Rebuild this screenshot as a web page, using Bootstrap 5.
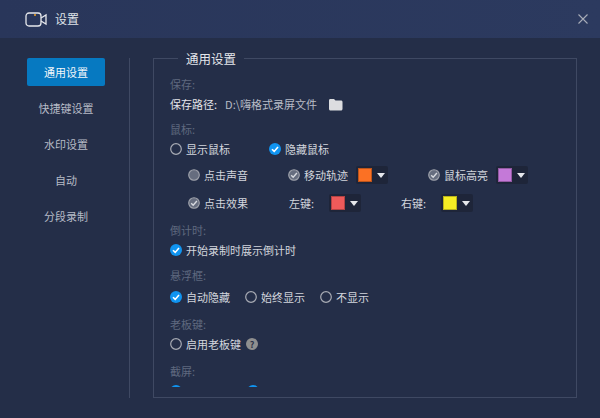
<!DOCTYPE html>
<html lang="zh-CN">
<head>
    <meta charset="UTF-8">
    <meta name="viewport" content="width=device-width, initial-scale=1.0">
    <title>设置</title>
    <link href="https://cdn.jsdelivr.net/npm/bootstrap@5.3.0/dist/css/bootstrap.min.css" rel="stylesheet">
    <style>
        html, body { height: 100%; }
        body { background: #242e48; color: #d3d6dd; font: 11px/1 "Noto Sans CJK SC", "Liberation Sans", sans-serif; overflow: hidden; }
        .title-bar { height: 38px; background: linear-gradient(90deg, #29365a, #2c3a5f); padding: 0 12px 0 25px; }
        .title-bar span { font-size: 12px; color: #dfe2e8; margin-left: 8px; }
        .main-wrap { padding-top: 11px; }
        .side-col { width: 130px; height: 340px; margin-top: 9px; padding-left: 27px; border-right: 1px solid #3f4963; }
        .side-item { width: 78px; height: 28px; margin-bottom: 8px; border-radius: 2px; color: #b6bbc6; }
        .side-item.on { background: #0679c1; color: #f2f6fa; }
        .group-box { width: 424px; height: 349px; margin: 0 0 0 23px; padding: 0; border: 1px solid #3f4963; }
        .group-box legend { float: none; width: auto; height: 18px; margin: 0 0 0 24px; padding: 1px 8px 0; font-size: 12.5px; line-height: 18px; color: #e3e6eb; }
        .group-clip { height: 320px; overflow: hidden; padding: 8px 0 0 16px; }
        .sect-label { height: 19px; color: #5f697f; display: flex; align-items: center; }
        .opt-row { height: 20px; }
        .sect-gap { margin-top: 6px; }
        .sect-gap-lg { margin-top: 8px; }
        .row-nudge { margin-top: 2px; }
        .sub-row { height: 20px; padding-left: 18px; margin-top: 8px; }
        .sub-row.first { margin-top: 6px; }
        .opt { gap: 4px; }
        .opt svg { flex: none; }
        .strong-label { color: #e4e6ea; }
        .path-text { color: #b8bcc6; margin-left: 8px; }
        .folder-ico { margin-left: 11px; }
        .w-show { width: 99px; }
        .w-sound { width: 100px; }
        .w-trail { width: 140px; }
        .w-effect { width: 101px; }
        .w-left { width: 112px; }
        .w-key { width: 40px; }
        .w-float { width: 75px; }
        .w-shot { width: 77px; }
        .picker { width: 32px; height: 18px; padding: 0 0 0 2px; background: #1e2539; border-radius: 2px; gap: 5px; }
        .picker-gap { margin-left: 4px; }
        .swatch { width: 14px; height: 14px; border: 1px solid rgba(0, 0, 0, .25); }
        .tri { width: 0; height: 0; border: 4px solid transparent; border-top: 5px solid #e6e8ec; border-bottom: 0; }
        .help-dot { width: 12px; height: 12px; margin-left: 5px; border-radius: 50%; background: #8f8f8f; color: #2b3348; font-size: 9px; font-weight: 700; }
    </style>
</head>
<body>
    <svg width="0" height="0" class="d-block">
        <symbol id="r-off" viewBox="0 0 12 12"><circle cx="6" cy="6" r="5.3" fill="none" stroke="#a8abb4" stroke-width="1.2"/></symbol>
        <symbol id="r-on" viewBox="0 0 12 12"><circle cx="6" cy="6" r="6" fill="#1094f0"/><path d="M3 6.2 5.2 8.4 9 4" fill="none" stroke="#fff" stroke-width="1.6"/></symbol>
        <symbol id="g-off" viewBox="0 0 12 12"><circle cx="6" cy="6" r="5.3" fill="#666d7f" stroke="#a0a3ac" stroke-width="1.1"/></symbol>
        <symbol id="g-on" viewBox="0 0 12 12"><circle cx="6" cy="6" r="5.3" fill="#666d7f" stroke="#a0a3ac" stroke-width="1.1"/><path d="M3.2 6.2 5.2 8.2 8.9 4" fill="none" stroke="#d8dae0" stroke-width="1.4"/></symbol>
    </svg>

    <!-- Title bar -->
    <div class="title-bar d-flex align-items-center">
        <svg width="22" height="15" viewBox="0 0 22 15">
            <rect x="1" y="1" width="15" height="13" rx="3" fill="none" stroke="#e6e8ec" stroke-width="1.3"/>
            <path d="M16 6 21 3V12L16 9" fill="none" stroke="#e6e8ec" stroke-width="1.3"/>
            <circle cx="10" cy="3" r="1" fill="#f0a020"/>
        </svg>
        <span>设置</span>
        <svg class="ms-auto" width="10" height="10" viewBox="0 0 10 10"><path d="M.5.5 9.5 9.5M9.5.5.5 9.5" stroke="#a9adb8" stroke-width="1.1"/></svg>
    </div>

    <div class="main-wrap d-flex">
        <!-- Side menu -->
        <div class="side-col flex-shrink-0">
            <div class="side-item on d-flex align-items-center justify-content-center">通用设置</div>
            <div class="side-item d-flex align-items-center justify-content-center">快捷键设置</div>
            <div class="side-item d-flex align-items-center justify-content-center">水印设置</div>
            <div class="side-item d-flex align-items-center justify-content-center">自动</div>
            <div class="side-item d-flex align-items-center justify-content-center">分段录制</div>
        </div>

        <!-- General settings -->
        <fieldset class="group-box">
            <legend>通用设置</legend>
            <div class="group-clip">
                <div class="sect-label">保存:</div>
                <div class="opt-row d-flex align-items-center">
                    <span class="strong-label">保存路径:</span>
                    <span class="path-text">D:\嗨格式录屏文件</span>
                    <svg class="folder-ico" width="15" height="13" viewBox="0 0 15 13"><path d="M1 2.5C1 1.7 1.5 1 2.3 1H6L7.5 2.5H13C13.8 2.5 14.5 3 14.5 4V11C14.5 11.8 13.8 12.5 13 12.5H2.5C1.7 12.5 1 11.8 1 11Z" fill="#dcdde0"/></svg>
                </div>

                <div class="sect-label sect-gap">鼠标:</div>
                <div class="opt-row d-flex align-items-center">
                    <div class="opt w-show d-flex align-items-center"><svg width="12" height="12"><use href="#r-off"/></svg>显示鼠标</div>
                    <div class="opt d-flex align-items-center"><svg width="12" height="12"><use href="#r-on"/></svg>隐藏鼠标</div>
                </div>
                <div class="sub-row first d-flex align-items-center">
                    <div class="opt w-sound d-flex align-items-center"><svg width="12" height="12"><use href="#g-off"/></svg>点击声音</div>
                    <div class="opt w-trail d-flex align-items-center">
                        <svg width="12" height="12"><use href="#g-on"/></svg>移动轨迹
                        <div class="picker picker-gap d-flex align-items-center"><div class="swatch" style="background: #fb7124"></div><div class="tri"></div></div>
                    </div>
                    <div class="opt d-flex align-items-center">
                        <svg width="12" height="12"><use href="#g-on"/></svg>鼠标高亮
                        <div class="picker picker-gap d-flex align-items-center"><div class="swatch" style="background: #c479d8"></div><div class="tri"></div></div>
                    </div>
                </div>
                <div class="sub-row d-flex align-items-center">
                    <div class="opt w-effect d-flex align-items-center"><svg width="12" height="12"><use href="#g-on"/></svg>点击效果</div>
                    <div class="w-left d-flex align-items-center">
                        <span class="w-key">左键:</span>
                        <div class="picker d-flex align-items-center"><div class="swatch" style="background: #ee5a5a"></div><div class="tri"></div></div>
                    </div>
                    <div class="d-flex align-items-center">
                        <span class="w-key">右键:</span>
                        <div class="picker d-flex align-items-center"><div class="swatch" style="background: #f6ee24"></div><div class="tri"></div></div>
                    </div>
                </div>

                <div class="sect-label sect-gap-lg">倒计时:</div>
                <div class="opt-row d-flex align-items-center">
                    <div class="opt d-flex align-items-center"><svg width="12" height="12"><use href="#r-on"/></svg>开始录制时展示倒计时</div>
                </div>

                <div class="sect-label sect-gap">悬浮框:</div>
                <div class="opt-row row-nudge d-flex align-items-center">
                    <div class="opt w-float d-flex align-items-center"><svg width="12" height="12"><use href="#r-on"/></svg>自动隐藏</div>
                    <div class="opt w-float d-flex align-items-center"><svg width="12" height="12"><use href="#r-off"/></svg>始终显示</div>
                    <div class="opt d-flex align-items-center"><svg width="12" height="12"><use href="#r-off"/></svg>不显示</div>
                </div>

                <div class="sect-label sect-gap-lg">老板键:</div>
                <div class="opt-row d-flex align-items-center">
                    <div class="opt d-flex align-items-center"><svg width="12" height="12"><use href="#r-off"/></svg>启用老板键</div>
                    <div class="help-dot d-flex align-items-center justify-content-center">?</div>
                </div>

                <div class="sect-label sect-gap-lg">截屏:</div>
                <div class="opt-row d-flex align-items-center">
                    <div class="opt w-shot d-flex align-items-center"><svg width="12" height="12"><use href="#r-on"/></svg></div>
                    <div class="opt d-flex align-items-center"><svg width="12" height="12"><use href="#r-on"/></svg></div>
                </div>
            </div>
        </fieldset>
    </div>

    <script src="https://cdn.jsdelivr.net/npm/bootstrap@5.3.0/dist/js/bootstrap.bundle.min.js"></script>
</body>
</html>
